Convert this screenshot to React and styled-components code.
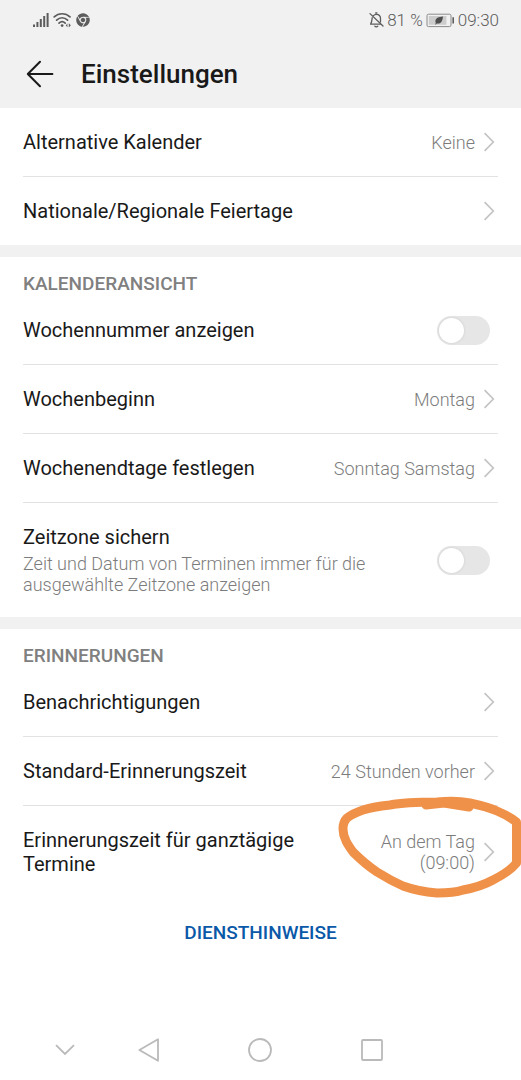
import styled, { createGlobalStyle } from "styled-components";
import { FaChrome } from "react-icons/fa";

const colors = {
  bar: "#f1f1f1",
  text: "#191919",
  muted: "#7c7c7c",
  status: "#5c5c5c",
  line: "#e2e2e2",
  chevron: "#c4c4c4",
  nav: "#bababa",
  link: "#0a59a8",
  marker: "#f0914a",
};

const GlobalStyle = createGlobalStyle`
  * {
    box-sizing: border-box;
  }
  body {
    margin: 0;
    background: #ffffff;
    color: ${colors.text};
    font-family: Roboto, "Liberation Sans", sans-serif;
  }
  button {
    border: 0;
    padding: 0;
    background: none;
    color: inherit;
    font: inherit;
    cursor: pointer;
  }
`;

const Page = styled.div`
  display: flex;
  flex-direction: column;
  min-height: 100vh;
  overflow-x: hidden;
`;

const TopArea = styled.header`
  background: ${colors.bar};
`;

const StatusBar = styled.div`
  display: flex;
  align-items: center;
  justify-content: space-between;
  height: 40px;
  padding: 0 22px 0 32px;
  color: ${colors.status};
  font-size: 17px;
  font-weight: 300;
`;

const StatusGroup = styled.div`
  display: flex;
  align-items: center;
  gap: ${({ $gap }) => $gap}px;
`;

const TitleBar = styled.div`
  display: flex;
  align-items: center;
  gap: 27px;
  height: 68px;
  padding: 0 24px 0 26px;
`;

const BackButton = styled.button`
  display: flex;
`;

const Title = styled.h1`
  margin: 0;
  font-size: 26px;
  font-weight: 500;
`;

const Section = styled.section`
  padding: 0 23px;
  border-bottom: ${({ $last }) => ($last ? "0" : `12px solid ${colors.bar}`)};
`;

const SectionTitle = styled.h2`
  margin: 0;
  padding-top: 16px;
  height: 39px;
  color: #808080;
  font-size: 19px;
  font-weight: 500;
  line-height: 22px;
`;

const List = styled.ul`
  margin: 0;
  padding: 0;
  list-style: none;
`;

const Item = styled.li`
  position: relative;
  & + & {
    border-top: 1px solid ${colors.line};
  }
`;

const RowButton = styled.button`
  display: flex;
  align-items: center;
  gap: 8px;
  width: 100%;
  min-height: 68px;
  padding-right: 3px;
  text-align: left;
`;

const RowLabel = styled.label`
  display: flex;
  align-items: center;
  width: 100%;
  min-height: 68px;
  padding-right: 8px;
  cursor: pointer;
`;

const Texts = styled.span`
  flex: 1;
  display: flex;
  flex-direction: column;
  gap: 4px;
  padding: 22px 0;
`;

const Name = styled.span`
  max-width: 300px;
  font-size: 20px;
  line-height: 24px;
`;

const Description = styled.span`
  max-width: 360px;
  color: ${colors.muted};
  font-size: 18px;
  font-weight: 300;
  line-height: 21px;
`;

const Value = styled.span`
  max-width: 148px;
  color: ${colors.muted};
  font-size: 18px;
  font-weight: 300;
  line-height: 21px;
  text-align: right;
`;

const Switch = styled.input`
  appearance: none;
  flex: none;
  margin: 0;
  width: 53px;
  height: 29px;
  padding: 2px;
  border-radius: 15px;
  background: #e6e6e6;
  cursor: pointer;
  &::before {
    content: "";
    display: block;
    width: 25px;
    height: 25px;
    border-radius: 50%;
    background: #ffffff;
    box-shadow: 0 0 2px 1px #d9d9d9;
  }
  &:checked {
    background: ${colors.link};
  }
  &:checked::before {
    margin-left: 24px;
  }
`;

const Marker = styled.svg`
  position: absolute;
  top: -10px;
  right: -23px;
  pointer-events: none;
`;

const NoticeLink = styled.a`
  align-self: center;
  margin-top: 23px;
  color: ${colors.link};
  font-size: 19px;
  font-weight: 500;
  line-height: 24px;
  text-decoration: none;
`;

const NavBar = styled.nav`
  display: grid;
  grid-template-columns: 57fr 111fr 111fr 111fr;
  height: 60px;
  margin-top: auto;
  padding: 0 18% 0 7%;
`;

const NavButton = styled.button`
  display: flex;
  align-items: center;
  justify-content: center;
`;

function SignalIcon() {
  return (
    <svg width="17" height="16" viewBox="0 0 17 16" fill={colors.status}>
      <rect x="1" y="12.5" width="2" height="2.5" />
      <rect x="4.4" y="10" width="2" height="5" />
      <rect x="7.8" y="7" width="2" height="8" />
      <rect x="11.2" y="4" width="2" height="11" />
      <rect x="14.6" y="1" width="2" height="14" />
    </svg>
  );
}

function WifiIcon() {
  return (
    <svg
      width="19"
      height="16"
      viewBox="0 0 19 16"
      fill="none"
      stroke={colors.status}
      strokeWidth="1.7"
      strokeLinecap="round"
    >
      <path d="M1.2 4.9C5.6 0.7 12.6 0.7 17 4.9" />
      <path d="M3.6 8.1C6.9 5 11.3 5 14.6 8.1" />
      <path d="M6 11.1C7.9 9.3 10.3 9.3 12.2 11.1" />
      <circle cx="9.1" cy="13.6" r="1.4" fill={colors.status} stroke="none" />
      <path
        d="M14.4 11.6V15.2L12.8 13.4ZM15.8 11.2V15.4L17.8 13.3Z"
        fill={colors.status}
        stroke="none"
      />
    </svg>
  );
}

function MutedBellIcon() {
  return (
    <svg
      width="15"
      height="16"
      viewBox="0 0 15 16"
      fill="none"
      stroke={colors.status}
      strokeWidth="1.3"
      strokeLinecap="round"
      strokeLinejoin="round"
    >
      <path d="M4.4 3.6C5.1 2.8 6.1 2.3 7.3 2.3C9.9 2.3 11.5 4.2 11.5 6.6V10" />
      <path d="M3.2 5.6C3 8.4 3 9.6 1.6 12.2H11.2" />
      <path d="M6.7 1H7.9" />
      <path d="M5.8 14.2C6.5 15.2 8.1 15.2 8.8 14.2" />
      <path d="M1 1.6L14 14" />
    </svg>
  );
}

function BatteryIcon() {
  return (
    <svg width="29" height="15" viewBox="0 0 29 15" fill="none">
      <rect x="1" y="1.2" width="24" height="12.4" rx="1.5" stroke="#8a8a8a" />
      <rect x="2.8" y="3" width="17.6" height="8.8" fill="#cccccc" />
      <path d="M26.4 4.2H28V10.6H26.4Z" fill={colors.status} />
      <path
        d="M17 3.4C12.5 3.6 9.4 5.2 9.4 8.2C9.4 8.8 9.6 9.4 9.9 9.9L9 11.2L9.8 11.6L10.8 10.5C14.8 11.2 16.6 8 17 3.4Z"
        fill="#4d4d4d"
      />
    </svg>
  );
}

function BackArrow() {
  return (
    <svg
      width="28"
      height="28"
      viewBox="0 0 28 28"
      fill="none"
      stroke={colors.text}
      strokeWidth="2"
      strokeLinecap="round"
      strokeLinejoin="round"
    >
      <path d="M14 1.7L1.8 14L14 26.3M2 14H26.4" />
    </svg>
  );
}

function Chevron() {
  return (
    <svg
      width="12"
      height="20"
      viewBox="0 0 12 20"
      fill="none"
      stroke={colors.chevron}
      strokeWidth="1.7"
    >
      <path d="M1.6 1.2L10.3 10L1.6 18.8" />
    </svg>
  );
}

function MarkerCircle() {
  return (
    <Marker
      width="183"
      height="104"
      viewBox="0 0 183 104"
      fill="none"
      stroke={colors.marker}
      strokeWidth="9"
      strokeLinejoin="round"
      strokeLinecap="round"
    >
      <path d="M178.5 42V67C173 74 165 79 155 84C146 89 136 92 125 94C116 97 107 97 99 97C87 96 76 94 65 90C56 86 47 81 39 76C30 70 22 63 15 56C10 49 5 42 5 33C5 28 6 25 9 22C14 18 19 16 25 14C34 11 43 10 52 9C67 6 83 6 99 6C110 5 122 5 132 7C141 9 150 11 159 15C166 18 172 21 178.5 26Z" />
      <path d="M88 9L106 7L131 11" />
    </Marker>
  );
}

function LinkRow({ name, value, children }) {
  return (
    <Item>
      <RowButton type="button">
        <Texts>
          <Name>{name}</Name>
        </Texts>
        {value && <Value>{value}</Value>}
        <Chevron />
      </RowButton>
      {children}
    </Item>
  );
}

function SwitchRow({ id, name, description }) {
  return (
    <Item>
      <RowLabel htmlFor={id}>
        <Texts>
          <Name>{name}</Name>
          {description && <Description>{description}</Description>}
        </Texts>
        <Switch id={id} type="checkbox" role="switch" />
      </RowLabel>
    </Item>
  );
}

function App() {
  return (
    <Page>
      <GlobalStyle />
      <TopArea>
        <StatusBar>
          <StatusGroup $gap={4}>
            <SignalIcon />
            <WifiIcon />
            <FaChrome size={14} />
          </StatusGroup>
          <StatusGroup $gap={3}>
            <MutedBellIcon />
            <span>81 %</span>
            <BatteryIcon />
            <span>09:30</span>
          </StatusGroup>
        </StatusBar>
        <TitleBar>
          <BackButton type="button" aria-label="Zurück">
            <BackArrow />
          </BackButton>
          <Title>Einstellungen</Title>
        </TitleBar>
      </TopArea>

      <Section>
        <List>
          <LinkRow name="Alternative Kalender" value="Keine" />
          <LinkRow name="Nationale/Regionale Feiertage" />
        </List>
      </Section>

      <Section>
        <SectionTitle>KALENDERANSICHT</SectionTitle>
        <List>
          <SwitchRow id="week-number" name="Wochennummer anzeigen" />
          <LinkRow name="Wochenbeginn" value="Montag" />
          <LinkRow name="Wochenendtage festlegen" value="Sonntag Samstag" />
          <SwitchRow
            id="time-zone"
            name="Zeitzone sichern"
            description="Zeit und Datum von Terminen immer für die ausgewählte Zeitzone anzeigen"
          />
        </List>
      </Section>

      <Section $last>
        <SectionTitle>ERINNERUNGEN</SectionTitle>
        <List>
          <LinkRow name="Benachrichtigungen" />
          <LinkRow name="Standard-Erinnerungszeit" value="24 Stunden vorher" />
          <LinkRow
            name="Erinnerungszeit für ganztägige Termine"
            value="An dem Tag (09:00)"
          >
            <MarkerCircle />
          </LinkRow>
        </List>
      </Section>

      <NoticeLink href="#diensthinweise">DIENSTHINWEISE</NoticeLink>

      <NavBar>
        <NavButton type="button" aria-label="Leiste ausblenden">
          <svg
            width="20"
            height="12"
            viewBox="0 0 20 12"
            fill="none"
            stroke={colors.nav}
            strokeWidth="1.8"
          >
            <path d="M1 1.2L10 10L19 1.2" />
          </svg>
        </NavButton>
        <NavButton type="button" aria-label="Zurück">
          <svg
            width="22"
            height="24"
            viewBox="0 0 22 24"
            fill="none"
            stroke={colors.nav}
            strokeWidth="1.8"
            strokeLinejoin="round"
          >
            <path d="M20 1.2V22.8L1.4 12Z" />
          </svg>
        </NavButton>
        <NavButton type="button" aria-label="Startseite">
          <svg
            width="24"
            height="24"
            viewBox="0 0 24 24"
            fill="none"
            stroke={colors.nav}
            strokeWidth="1.8"
          >
            <circle cx="12" cy="12" r="11" />
          </svg>
        </NavButton>
        <NavButton type="button" aria-label="Übersicht">
          <svg
            width="22"
            height="22"
            viewBox="0 0 22 22"
            fill="none"
            stroke={colors.nav}
            strokeWidth="1.8"
          >
            <rect x="1" y="1" width="20" height="20" rx="1" />
          </svg>
        </NavButton>
      </NavBar>
    </Page>
  );
}

export default App;
